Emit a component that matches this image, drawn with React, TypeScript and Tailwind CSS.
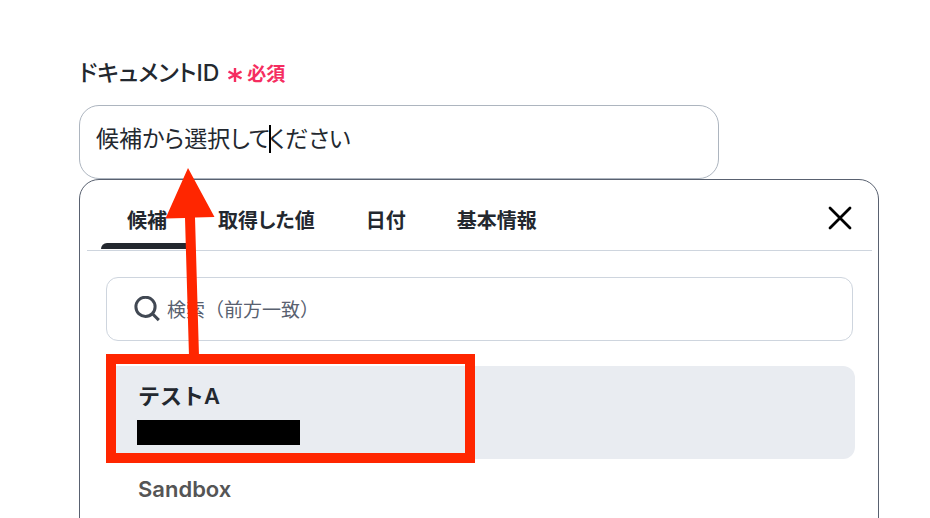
import { useState } from "react";

const tabs = ["候補", "取得した値", "日付", "基本情報"];

function CloseIcon() {
  return (
    <svg viewBox="0 0 24 24" className="size-6" fill="none" stroke="#000000" strokeWidth="2.8" strokeLinecap="round" aria-hidden="true">
      <path d="M2 2 22 22M22 2 2 22" />
    </svg>
  );
}

function SearchIcon() {
  return (
    <svg viewBox="0 0 26 26" className="size-[26px] shrink-0" fill="none" stroke="#414853" strokeWidth="3" aria-hidden="true">
      <circle cx="11.5" cy="10.8" r="9.6" />
      <path d="m18.2 17.5 6.6 6.6" />
    </svg>
  );
}

function RequiredMark() {
  return (
    <svg viewBox="0 0 16 16" className="size-4" fill="none" stroke="#f52d60" strokeWidth="2.4" aria-hidden="true">
      <path d="M8 1v14M1.5 4.5l13 7M14.5 4.5l-13 7" />
    </svg>
  );
}

export default function App() {
  const [value, setValue] = useState("候補から選択してください");
  const [active, setActive] = useState(0);

  return (
    <main className="h-screen overflow-hidden bg-white pt-[57px] pr-[51px] pl-[79px] font-['Inter','Noto_Sans_CJK_JP',sans-serif] text-[#23282f]">
      <label htmlFor="document-id" className="flex h-8 items-center text-[23px] leading-8 font-medium [font-feature-settings:'palt']">
        ドキュメントID
        <span className="ml-2 flex items-center gap-1 pt-1 text-[19px] font-bold text-[#f52d60]">
          <RequiredMark />
          必須
        </span>
      </label>

      <div className="relative mt-4 w-4/5">
        <input
          id="document-id"
          value={value}
          onChange={(e) => setValue(e.target.value)}
          className="block h-[74px] w-full rounded-[20px] border border-[#adb5bf] px-4 pb-2.5 text-[23px] outline-none [font-feature-settings:'palt']"
        />
        <span className="absolute top-5 left-[190px] h-7 w-0.5 bg-black" />
      </div>

      <section className="relative h-96 rounded-t-[20px] border border-[#596170] pr-1.5 pl-[7px]">
        <div className="flex h-[71px] items-stretch border-b border-[#ced5de] pr-5 pl-3.5">
          <div role="tablist" className="flex flex-1">
            {tabs.map((tab, i) => (
              <button
                key={tab}
                role="tab"
                aria-selected={i === active}
                onClick={() => setActive(i)}
                className="relative pr-[25px] pl-[26px] pt-3 text-xl font-bold [font-feature-settings:'palt']"
              >
                {tab}
                {i === active && <span className="absolute inset-x-0 bottom-px h-1.5 rounded-t-md bg-[#23282f]" />}
              </button>
            ))}
          </div>
          <button aria-label="閉じる" className="pt-1.5">
            <CloseIcon />
          </button>
        </div>

        <div className="pt-[26px] pr-[17px] pl-[19px]">
          <label className="mr-0.5 flex h-16 items-center gap-[7px] rounded-xl border border-[#ced5de] pl-[27px]">
            <SearchIcon />
            <input
              type="text"
              aria-label="検索"
              placeholder="検索（前方一致）"
              className="w-full bg-transparent pt-1 text-[19px] outline-none placeholder:text-[#596170]"
            />
          </label>

          <ul className="mt-[25px] text-[22px] leading-8 font-semibold">
            <li>
              <button className="block h-[93px] w-full rounded-xl bg-[#e9ecf1] px-[31px] text-left">
                <span className="block pl-px">テストA</span>
                <span className="mt-2 block h-[25px] w-[163px] bg-black" />
              </button>
            </li>
            <li>
              <button className="block w-full px-8 py-3.5 text-left text-[#555555]">Sandbox</button>
            </li>
          </ul>
        </div>

        <div className="pointer-events-none absolute top-[174px] left-[26px] h-[109px] w-[369px] border-10 border-[#ff2600]" />
        <svg viewBox="0 0 50 188" className="pointer-events-none absolute -top-3 left-[85px] h-[188px] w-[50px]" fill="#ff2600" aria-hidden="true">
          <path d="M23 0 49.5 49 30 49.5 34 188H24L20 50 .5 50.5Z" />
        </svg>
      </section>
    </main>
  );
}
